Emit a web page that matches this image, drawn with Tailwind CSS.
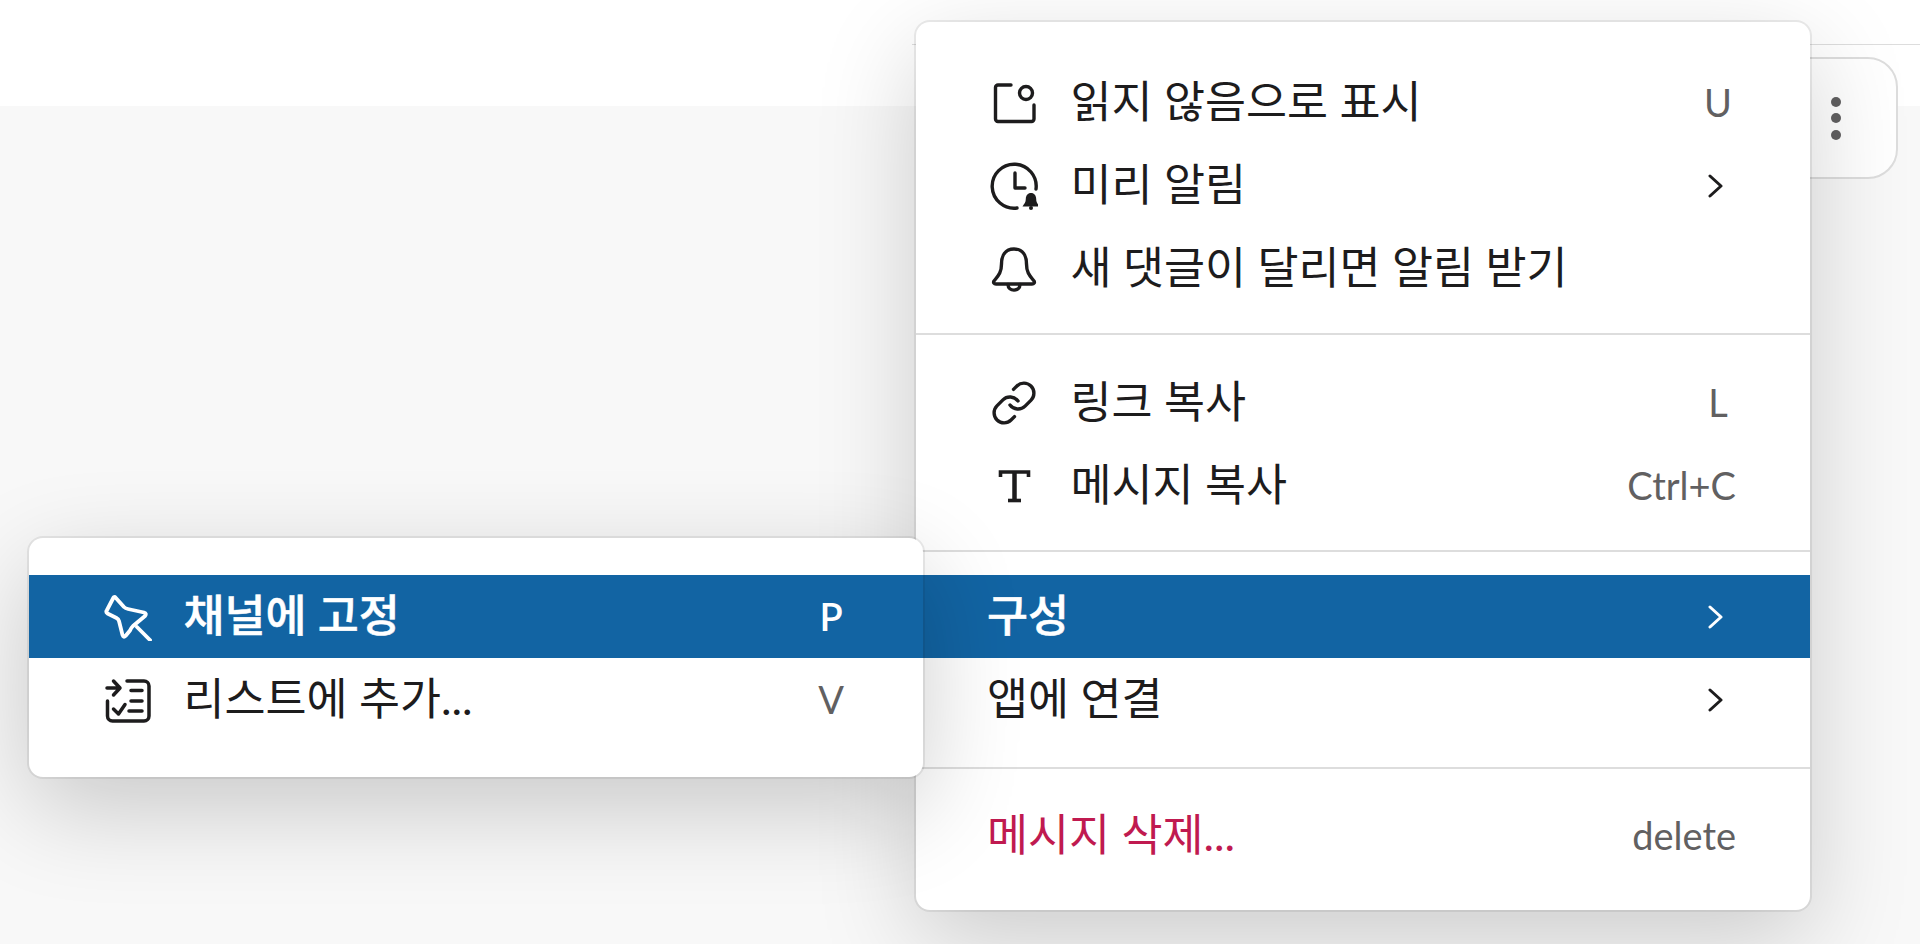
<!DOCTYPE html>
<html lang="ko">
<head>
    <meta charset="UTF-8">
    <meta name="viewport" content="width=device-width, initial-scale=1.0">
    <title>Message menu</title>
    <script src="https://cdn.jsdelivr.net/npm/@tailwindcss/browser@4"></script>
</head>
<body class="bg-[#f8f8f8] overflow-hidden font-['Lato','Noto_Sans_CJK_KR',sans-serif] text-[#1d1c1d]">

    <!-- Page behind the menus -->
    <div class="relative h-[944px] w-[1920px]">
        <header class="h-[106px] bg-white">
            <div class="ml-[912px] h-[45px] border-b border-[#dddddd]"></div>
        </header>

        <!-- Message toolbar (only the end of it shows) -->
        <div class="absolute left-[1600px] top-[57px] flex h-[122px] w-[298px] items-center justify-end rounded-[30px] border-2 border-[#dddddd] bg-white pr-[55px]">
            <div class="flex flex-col gap-[6.500px]">
                <span class="block h-[10px] w-[10px] rounded-full bg-[#616061]"></span>
                <span class="block h-[10px] w-[10px] rounded-full bg-[#616061]"></span>
                <span class="block h-[10px] w-[10px] rounded-full bg-[#616061]"></span>
            </div>
        </div>

        <!-- Main menu -->
        <div class="absolute left-[916px] top-[22px] w-[894px] rounded-[14px] bg-white pt-[39px] pb-[33px] text-[44.600px] shadow-[0_0_0_2px_rgba(29,28,29,0.08),0_30px_100px_rgba(0,0,0,0.18)]">
            <div class="flex h-[83px] items-center pl-[74px] pr-[74px]">
                <svg class="mr-[32.500px] h-[48px] w-[48px] shrink-0" viewBox="0 0 48 48" fill="none" stroke="currentColor" stroke-width="3.400" stroke-linecap="round" stroke-linejoin="round">
                    <path d="M21 6H8A2.500 2.500 0 0 0 5.500 8.500V40A2.500 2.500 0 0 0 8 42.500H41.500A2.500 2.500 0 0 0 44 40V26"/>
                    <circle cx="36" cy="14" r="6.500"/>
                </svg>
                <span class="flex-1 pb-[2px]">읽지 않음으로 표시</span>
                <span class="w-[36px] text-center text-[38px] text-[#616061]">U</span>
            </div>
            <div class="flex h-[83px] items-center pl-[74px] pr-[74px]">
                <svg class="mr-[32.500px] h-[48px] w-[48px] shrink-0" viewBox="0 0 48 48" fill="none" stroke="currentColor" stroke-width="3.400" stroke-linecap="round" stroke-linejoin="round">
                    <path d="M46 27A22 22 0 1 0 27 46"/>
                    <path d="M25 11V26H35"/>
                    <path fill="currentColor" stroke="none" d="M41 31c-3.200 0-5.200 2.600-5.200 6 0 3.500-1.500 4.600-3.300 7.500h17c-1.800-2.900-3.300-4-3.300-7.500 0-3.400-2-6-5.200-6z"/>
                    <circle cx="41" cy="46" r="2" fill="currentColor" stroke="none"/>
                </svg>
                <span class="flex-1 pb-[2px]">미리 알림</span>
                <svg class="h-[44px] w-[28px]" viewBox="0 0 28 44" fill="none" stroke="#1d1c1d" stroke-width="3" stroke-linecap="round" stroke-linejoin="round"><path d="M2 12L13 22L2 32"/></svg>
            </div>
            <div class="flex h-[83px] items-center pl-[74px] pr-[74px]">
                <svg class="mr-[32.500px] h-[48px] w-[48px] shrink-0" viewBox="0 0 48 48" fill="none" stroke="currentColor" stroke-width="3.400" stroke-linecap="round" stroke-linejoin="round">
                    <path d="M24 4C15 4 11.500 11 11.500 19C11.500 28 8 31 4 36C3 37.500 4 39 6 39H42C44 39 45 37.500 44 36C40 31 36.500 28 36.500 19C36.500 11 33 4 24 4Z"/>
                    <path d="M18 39.500c0 7.500 12 7.500 12 0"/>
                </svg>
                <span class="flex-1 pb-[2px]">새 댓글이 달리면 알림 받기</span>
            </div>

            <div class="mb-[26.500px] mt-[23px] h-[1.500px] bg-[#dddddd]"></div>

            <div class="flex h-[83px] items-center pl-[74px] pr-[74px]">
                <svg class="mr-[32.500px] h-[48px] w-[48px] shrink-0" viewBox="0 0 24 24" fill="none" stroke="currentColor" stroke-width="1.700" stroke-linecap="round" stroke-linejoin="round">
                    <path d="M10 13a5 5 0 0 0 7.540.540l3-3a5 5 0 0 0-7.070-7.070l-1.720 1.710"/>
                    <path d="M14 11a5 5 0 0 0-7.540-.540l-3 3a5 5 0 0 0 7.070 7.070l1.710-1.710"/>
                </svg>
                <span class="flex-1 pb-[2px]">링크 복사</span>
                <span class="w-[36px] text-center text-[38px] text-[#616061]">L</span>
            </div>
            <div class="flex h-[83px] items-center pl-[74px] pr-[74px]">
                <svg class="mr-[32.500px] h-[48px] w-[48px] shrink-0" viewBox="0 0 48 48" fill="none" stroke="currentColor" stroke-width="3.600">
                    <path d="M10.500 15V10H38.500V15"/>
                    <path stroke-width="4.500" d="M24.500 10V38"/>
                    <path d="M18 38.500H31"/>
                </svg>
                <span class="flex-1 pb-[2px]">메시지 복사</span>
                <span class="text-[38px] text-[#616061]">Ctrl+C</span>
            </div>

            <div class="mb-[23.500px] mt-[23px] h-[1.500px] bg-[#dddddd]"></div>

            <div class="flex h-[83px] items-center bg-[#1264a3] pl-[71px] pr-[74px] font-medium text-white">
                <span class="flex-1 pb-[2px] [-webkit-text-stroke:0.5px_white]">구성</span>
                <svg class="h-[44px] w-[28px]" viewBox="0 0 28 44" fill="none" stroke="#ffffff" stroke-width="3" stroke-linecap="round" stroke-linejoin="round"><path d="M2 12L13 22L2 32"/></svg>
            </div>
            <div class="flex h-[83px] items-center pl-[71px] pr-[74px]">
                <span class="flex-1 pb-[2px]">앱에 연결</span>
                <svg class="h-[44px] w-[28px]" viewBox="0 0 28 44" fill="none" stroke="#1d1c1d" stroke-width="3" stroke-linecap="round" stroke-linejoin="round"><path d="M2 12L13 22L2 32"/></svg>
            </div>

            <div class="mb-[25.500px] mt-[26px] h-[1.500px] bg-[#dddddd]"></div>

            <div class="flex h-[83px] items-center pl-[71px] pr-[74px]">
                <span class="flex-1 pb-[2px] text-[#c01a50]">메시지 삭제...</span>
                <span class="text-[38px] text-[#616061]">delete</span>
            </div>
        </div>

        <!-- Submenu -->
        <div class="absolute left-[29px] top-[538px] w-[894px] rounded-[14px] bg-white pb-[36px] pt-[37px] text-[44.600px] shadow-[0_0_0_2px_rgba(29,28,29,0.08),0_30px_100px_rgba(0,0,0,0.2)]">
            <div class="flex h-[83px] items-center bg-[#1264a3] pl-[75px] pr-[74px] font-medium text-white">
                <svg class="mr-[31.500px] h-[48px] w-[48px] shrink-0" viewBox="0 0 48 48" fill="none" stroke="currentColor" stroke-width="3.800" stroke-linecap="round" stroke-linejoin="round">
                    <path d="M11 4L20 14Q21.500 15.500 24 16L40 19.500Q43 20.500 41 23L29 33Q27 35 26 37.500L21.500 43Q19.500 45 18.500 42L15 28Q14.500 26 12.500 25L3.500 20.500Q1.500 19 3 17L9 5.500Q10 3.500 11 4Z"/>
                    <path d="M33 34L46 47"/>
                </svg>
                <span class="flex-1 pb-[2px] [-webkit-text-stroke:0.5px_white]">채널에 고정</span>
                <span class="w-[36px] text-center text-[38px] font-semibold">P</span>
            </div>
            <div class="flex h-[83px] items-center pl-[75px] pr-[74px]">
                <svg class="mr-[31.500px] h-[48px] w-[48px] shrink-0" viewBox="0 0 48 48" fill="none" stroke="currentColor" stroke-width="3.500" stroke-linecap="round" stroke-linejoin="round">
                    <path d="M23 5H40A5 5 0 0 1 45 10V40A5 5 0 0 1 40 45H8.500A5 5 0 0 1 3.500 40V25"/>
                    <path d="M3 12H16M9.500 5L16 12L9.500 19"/>
                    <path d="M27 14.500H38M27 25H38M25 35H38"/>
                    <path d="M9.500 33L14.500 38L21 28.500"/>
                </svg>
                <span class="flex-1 pb-[2px]">리스트에 추가...</span>
                <span class="w-[36px] text-center text-[38px] text-[#616061]">V</span>
            </div>
        </div>
    </div>
</body>
</html>
